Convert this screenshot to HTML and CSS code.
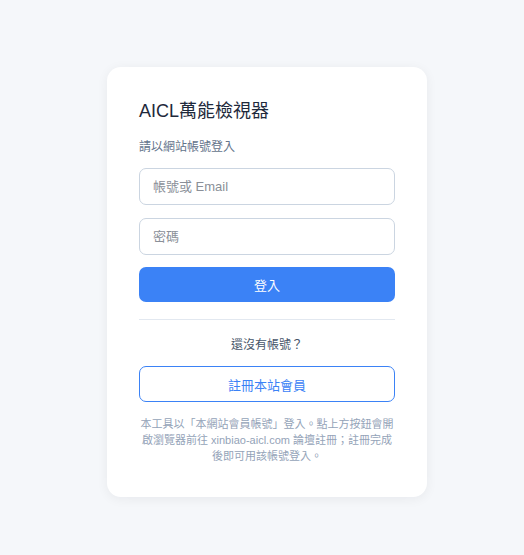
FILE: index.html
```html
<!DOCTYPE html>
<html lang="zh-Hant">
<head>
<meta charset="utf-8">
<title>AICL萬能檢視器</title>
<link rel="stylesheet" href="styles.css">
</head>
<body>
<div class="page">
  <div class="card">
    <h1 class="title">AICL萬能檢視器</h1>
    <p class="subtitle">請以網站帳號登入</p>
    <form class="form">
      <input class="input" type="text" placeholder="帳號或 Email">
      <input class="input" type="password" placeholder="密碼">
      <button class="btn-primary" type="button">登入</button>
    </form>
    <hr class="divider">
    <p class="prompt">還沒有帳號？</p>
    <button class="btn-outline" type="button">註冊本站會員</button>
    <p class="note">本工具以「本網站會員帳號」登入。點上方按鈕會開啟瀏覽器前往 xinbiao-aicl.com 論壇註冊；註冊完成後即可用該帳號登入。</p>
  </div>
</div>
</body>
</html>
```
FILE: styles.css
```css
* { box-sizing: border-box; }
html, body { margin: 0; padding: 0; }
body {
  background: #f5f7fa;
  font-family: "Liberation Sans", Arial, "Noto Sans CJK TC", sans-serif;
  color: #1e293b;
}
.page {
  padding: 67px 0 0 107px;
  min-height: 555px;
}
.card {
  width: 320px;
  background: #ffffff;
  border-radius: 14px;
  padding: 32px 32px 33px;
  box-shadow: 0 2px 12px rgba(15, 23, 42, 0.06);
}
.title {
  margin: 0;
  font-size: 18px;
  font-weight: 400;
  line-height: 24px;
  color: #1e293b;
}
.subtitle {
  margin: 16px 0 0;
  font-size: 12px;
  line-height: 16px;
  color: #64748b;
}
.form {
  margin-top: 13px;
  display: flex;
  flex-direction: column;
  gap: 13px;
}
.input {
  display: block;
  width: 256px;
  height: 37px;
  border: 1px solid #cbd5e1;
  border-radius: 7px;
  padding: 0 13px;
  font-family: inherit;
  font-size: 13px;
  color: #1e293b;
  background: #fff;
  outline: none;
}
.input::placeholder { color: #8a8f98; }
.btn-primary {
  display: block;
  width: 256px;
  height: 35px;
  margin-top: -1px;
  border: none;
  border-radius: 7px;
  background: #3b82f6;
  color: #ffffff;
  font-family: inherit;
  font-size: 13px;
}
.divider {
  margin: 17px 0 0;
  border: none;
  border-top: 1px solid #e2e8f0;
}
.prompt {
  margin: 17px 0 0;
  text-align: center;
  font-size: 12px;
  line-height: 16px;
  color: #475569;
}
.btn-outline {
  display: block;
  margin-top: 13px;
  width: 256px;
  height: 36px;
  border: 1px solid #3b82f6;
  border-radius: 7px;
  background: #ffffff;
  color: #3b82f6;
  font-family: inherit;
  font-size: 13px;
}
.note {
  margin: 14px 0 0;
  text-align: center;
  font-size: 11px;
  line-height: 16px;
  color: #94a3b8;
}
```
